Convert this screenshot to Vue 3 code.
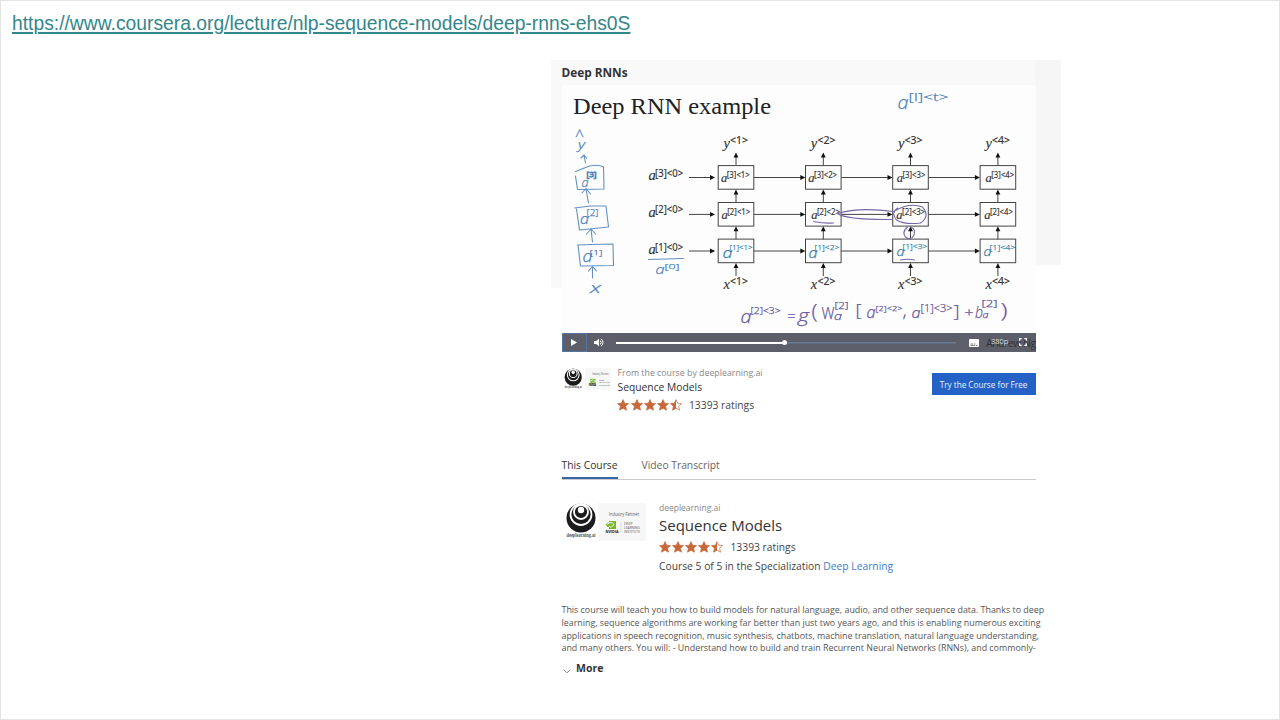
<script setup>
const url = 'https://www.coursera.org/lecture/nlp-sequence-models/deep-rnns-ehs0S'
const columns = [735.5, 822.8, 910, 997.4]
const rows = [177.5, 214.4, 251]

// Printed formulas: letter plus superscript, each fitted to its drawn width
const printed = []
const formula = (base, sup, x, y, w, small) => printed.push({ base, sup, x, y, w, small })
columns.forEach((c, i) => {
  formula('y', `<${i + 1}>`, c - 12.5, 148, 18)
  formula('x', `<${i + 1}>`, c - 12.5, 288.5, 18)
  const shift = [0, 0, 1.2, 2.6][i]
  formula('a', `[3]<${i + 1}>`, c - 15 + shift, 181.5, 23, true)
  formula('a', `[2]<${i + 1}>`, c - 14.5 + [0, 2.4, 0.3, 0.8][i], 218.6, 23, true)
})
;[3, 2, 1].forEach((n, i) => formula('a', `[${n}]<0>`, 648, [180.3, 217.2, 254.3][i], 28))

// Handwritten notes: text, x, baseline, width, size, tilt, colour
const notes = [
  ['a', 897, 109, 11, 19, 0, 'blue', true],
  ['[l]<t>', 908, 100.5, 40, 11, 0, 'blue'],
  ['^', 574.5, 142, 9, 16, 0, 'blue'],
  ['y', 577.5, 149, 7, 12, 0, 'blue', true],
  ['a', 581, 187, 7, 13, 0, 'blue', true],
  ['[3]', 586, 176.5, 10, 8, 0, 'blue heavy'],
  ['a', 579.5, 223.5, 9, 14, 0, 'blue', true],
  ['[2]', 586, 216, 12, 9, 0, 'blue'],
  ['a', 582, 261.5, 10, 17, 0, 'blue', true],
  ['[1]', 589, 254.5, 13, 8, 0, 'blue'],
  ['x', 589.5, 293, 11, 15, 0, 'blue', true],
  ['a', 655, 273.5, 9, 13, 0, 'blue', true],
  ['[0]', 664, 268.5, 15, 8, 0, 'blue'],
  ['a', 722, 257.5, 10, 15, 0, 'teal', true],
  ['[1]<1>', 729, 249.5, 23, 8, 0, 'teal'],
  ['a', 808, 257.5, 9, 14, 0, 'teal', true],
  ['[1]<2>', 814, 249.5, 25, 8, 0, 'teal'],
  ['a', 896, 255.5, 8, 12, 0, 'teal', true],
  ['[1]<3>', 902, 248.5, 25, 8, 0, 'teal'],
  ['a', 983, 255.5, 8, 12, 0, 'teal', true],
  ['[1]<4>', 989, 250, 26, 8, 0, 'teal'],
  ['a', 740, 323, 11, 18, 0, 'purple', true],
  ['[2]<3>', 750, 313.5, 30, 9, 0, 'purple'],
  ['=', 787, 321, 8, 13, 0, 'purple'],
  ['g', 797.5, 322, 11, 18, 0, 'purple', true],
  ['(', 811, 319, 6, 20, 0, 'purple'],
  ['W', 821, 318.5, 13, 16, 0, 'purple'],
  ['a', 833.5, 320, 8, 11, 0, 'purple', true],
  ['[2]', 834, 308.5, 14, 9, 0, 'purple'],
  ['[', 855, 316, 6, 16, 0, 'purple'],
  ['a', 866, 317.5, 9, 16, 0, 'purple', true],
  ['[2]<2>', 875, 311, 27, 8, 0, 'purple'],
  [',', 902, 317, 4, 18, 0, 'purple'],
  ['a', 911, 317.5, 9, 15, 0, 'purple', true],
  ['[1]<3>', 920, 312, 32, 10, 0, 'purple'],
  [']', 953, 317, 6, 17, 0, 'purple'],
  ['+', 964, 316.5, 9, 12, 0, 'purple'],
  ['b', 974.5, 318, 8, 17, 0, 'purple', true],
  ['a', 982, 318, 6, 9, 0, 'purple', true],
  ['[2]', 981, 306.5, 16, 9, 0, 'purple'],
  [')', 1000, 317.5, 7, 20, 0, 'purple'],
].map(([t, x, y, w, s, , c, it]) => ({ t, x, y, w, s, c, it }))

const star = 'M6 .6 7.6 4.2 11.5 4.6 8.6 7.2 9.5 11.2 6 9.2 2.5 11.2 3.4 7.2 .5 4.6 4.4 4.2Z'
const starHalf = 'M6 .6V9.2L2.5 11.2 3.4 7.2 .5 4.6 4.4 4.2Z'
const description = [
  'This course will teach you how to build models for natural language, audio, and other sequence data. Thanks to deep',
  'learning, sequence algorithms are working far better than just two years ago, and this is enabling numerous exciting',
  'applications in speech recognition, music synthesis, chatbots, machine translation, natural language understanding,',
  'and many others. You will: - Understand how to build and train Recurrent Neural Networks (RNNs), and commonly-',
]
</script>

<template>
  <div class="page">
    <header><a class="url">{{ url }}</a></header>
    <main>
      <section class="hero">
        <h1>Deep RNNs</h1>
        <svg class="slide" viewBox="561.5 85 474 248" width="474" height="248">
          <text class="slide-title" x="572.5" y="113.5" textLength="198" lengthAdjust="spacingAndGlyphs">Deep RNN example</text>
          <g class="wires">
            <template v-for="(c, i) in columns" :key="c">
              <rect v-for="r in rows" :key="r" :x="c - 17.8" :y="r - 11.9" width="35.6" height="23.6" />
              <template v-for="y in [165.5, 202.4, 239.3, 276]" :key="y">
                <path :d="`M${c} ${y}V${y - 9}`" />
                <path class="head" :d="`M${c} ${y - 13}l2.4 5h-4.8z`" />
              </template>
              <template v-for="r in rows" :key="'h' + r">
                <path :d="`M${i ? columns[i - 1] + 18 : 688.5} ${r}H${c - 22}`" />
                <path class="head" :d="`M${i ? c - 18 : 714.5} ${r}l-5 -2.4v4.8z`" />
              </template>
            </template>
          </g>
          <g v-for="(f, i) in printed" :key="i" class="printed" :class="{ small: f.small }">
            <text class="base" :x="f.x" :y="f.y">{{ f.base }}</text>
            <text class="sup" :x="f.x + (f.small ? 5.8 : 6.6)" :y="f.y - 3.8" :textLength="f.w" lengthAdjust="spacingAndGlyphs">{{ f.sup }}</text>
          </g>
          <g class="ink">
            <path class="blue" d="M575 171.5 589 166Q598 164 603 167L603.5 189 577 189.500 575 176M574 208 590 206 605.500 206 608 227 579 230 576 209M577 245 590 244.500 612.500 244 613 265.500 580 266 577.500 245" />
            <path class="blue" d="M585 163 583.500 155M580.500 158 583.500 155 586 158M588 203 585.500 189M581.500 193 585.500 188.500 590 194M592 242 590.500 229M586 234 590.500 229 595 234M592 278 592 267M588 271 592 266.500 596 271" />
            <path class="blue" d="M648 259.500 683 258.500" />
            <path class="purple" d="M813 221.500Q823 223.500 833 223M837 213.500Q858 207 893 211.500M837 213.500Q846 220 892 219.500M894 211Q909 202 922 207Q930 216 920 223Q904 225 896 220Q890 213 897 208M900 260Q907 258.500 914 260M907 227Q901 232 905 237Q910 241 913 236Q916 229 910 227" />
            <text v-for="(n, i) in notes" :key="i" :class="[n.c, { slant: n.it }]" :x="n.x" :y="n.y" :font-size="n.s" :textLength="n.w" lengthAdjust="spacingAndGlyphs">{{ n.t }}</text>
          </g>
        </svg>
      </section>

      <div class="controls">
        <span class="play"><svg width="8" height="9" viewBox="0 0 8 9"><path d="M1 1 7 4.500 1 8Z" /></svg></span>
        <svg class="volume" width="10" height="9" viewBox="0 0 10 9"><path d="M0 3H2.200L5 .7V8.300L2.200 6H0Z" /><path class="line" d="M6.300 2.500Q8 4.500 6.300 6.500M7.200 .8Q10.800 4.500 7.200 8.200" /></svg>
        <span class="track"><i></i><b></b></span>
        <svg class="cc" width="10" height="8" viewBox="0 0 10 8"><rect width="10" height="8" rx="1" /><path d="M1.500 5H4M5 5H6.500M1.500 6.500H6M7 6.500H8.500" /></svg>
        <span class="author">Andrew Ng<em>380p</em></span>
        <svg class="full" width="8" height="8" viewBox="0 0 8 8"><path d="M.7 2.700V.7H2.700M5.300 .7H7.300V2.700M7.300 5.300V7.300H5.300M2.700 7.300H.7V5.300" /></svg>
      </div>

      <section class="summary">
        <svg class="logo" viewBox="0 0 82 42" width="47" height="24">
          <circle cx="16" cy="16" r="15" /><circle class="ring" cx="16" cy="12" r="10.300" /><circle class="ring" cx="16" cy="10" r="6.800" /><circle class="dot" cx="16" cy="7.500" r="3" />
          <text x="1" y="35" font-size="6" textLength="30" lengthAdjust="spacingAndGlyphs" class="serif">deeplearning.ai</text>
          <rect class="card" x="37" y="0" width="45" height="38" />
          <text x="49" y="13" font-size="5" textLength="29" lengthAdjust="spacingAndGlyphs">Industry Partner</text>
          <rect class="green" x="46" y="19" width="9" height="8" /><path class="white" d="M46 23Q51 18 55 23Q50 28 48 23" />
          <text class="nv" x="43" y="31" font-size="4.500" textLength="13">NVIDIA</text>
          <text x="61" y="22" font-size="4">DEEP</text><text x="61" y="26.500" font-size="4">LEARNING</text><text x="61" y="31" font-size="4">INSTITUTE</text>
        </svg>
        <div class="summary-text">
          <span class="from">From the course by deeplearning.ai</span>
          <span class="name">Sequence Models</span>
          <span class="rating">
            <svg v-for="n in 5" :key="n" width="12" height="12" viewBox="0 0 12 12"><path :d="n < 5 ? star : starHalf" /><path class="outline" :d="star" /></svg>
            <span>13393 ratings</span>
          </span>
        </div>
        <button>Try the Course for Free</button>
      </section>

      <nav><span class="active">This Course</span><span class="second">Video Transcript</span></nav>

      <section class="course">
        <svg class="logo" viewBox="0 0 82 42" width="82" height="42">
          <circle cx="16" cy="16" r="14.500" /><circle class="ring" cx="16" cy="12.500" r="10.500" /><circle class="ring" cx="16" cy="10" r="7" /><circle class="dot" cx="16" cy="8" r="3.200" />
          <text x="1.500" y="34.500" font-size="5.200" textLength="29" lengthAdjust="spacingAndGlyphs" class="serif">deeplearning.ai</text>
          <rect class="card" x="33" y="1" width="48" height="38" />
          <text x="44" y="14" font-size="4.800" textLength="30" lengthAdjust="spacingAndGlyphs">Industry Partner</text>
          <path class="green" d="M44 19H51V27H44V25H42.500L40.500 22.500 44 20.500Z" /><path class="white" d="M42.500 22.500Q46 18.500 49 22.500Q46 26.500 44 24" />
          <text class="nv" x="40.500" y="30.500" font-size="4" textLength="13" lengthAdjust="spacingAndGlyphs">NVIDIA</text>
          <path class="divider" d="M56 20V30.500" />
          <text x="59" y="22.500" font-size="3.600">DEEP</text><text x="59" y="26.500" font-size="3.600" textLength="16" lengthAdjust="spacingAndGlyphs">LEARNING</text><text x="59" y="30.500" font-size="3.600" textLength="16" lengthAdjust="spacingAndGlyphs">INSTITUTE</text>
        </svg>
        <div class="course-text">
          <span class="org">deeplearning.ai</span>
          <h2>Sequence Models</h2>
          <span class="rating">
            <svg v-for="n in 5" :key="n" width="12" height="12" viewBox="0 0 12 12"><path :d="n < 5 ? star : starHalf" /><path class="outline" :d="star" /></svg>
            <span>13393 ratings</span>
          </span>
          <span class="spec">Course 5 of 5 in the Specialization <a>Deep Learning</a></span>
        </div>
      </section>

      <p><span v-for="(line, i) in description" :key="i" :class="'line' + i">{{ line }}</span></p>
      <div class="more"><svg width="8" height="5" viewBox="0 0 8 5"><path d="M.8 .8 4 3.800 7.200 .8" /></svg><strong>More</strong></div>
    </main>
  </div>
</template>

<style>
body { margin: 0; background: #fff; }
</style>
<style scoped>
* { box-sizing: border-box; }
.page { width: 1280px; height: 720px; background: #fff; border: 1px solid #e4e4e4; font-family: "Open Sans", "Noto Sans", sans-serif; color: #444; overflow: hidden; white-space: nowrap; }
header { height: 59px; padding: 10px 0 0 11px; }
.url { font: 19.300px/26px "Liberation Sans", sans-serif; color: #33878b; text-decoration: underline; text-decoration-thickness: 1.500px; text-underline-offset: 2px; }
main { margin-left: 550px; width: 510px; }
.hero { height: 273px; padding-left: 10.500px; background: linear-gradient(#f6f6f6, #f6f6f6) 484px 0 / 26px 205px no-repeat, linear-gradient(#f9f9f9, #f9f9f9) 0 0 / 484px 228px no-repeat; }
h1 { margin: 0; height: 25px; font-size: 11.800px; line-height: 24px; font-weight: 700; color: #333; }
.slide { display: block; background: #fdfdfe; }
.slide-title { font: 24px "Liberation Serif", serif; fill: #222; }
.wires { fill: none; stroke: #444; stroke-width: 1; }
.wires .head { fill: #111; stroke: none; }
.printed { fill: #333; stroke: #333; stroke-width: .15px; font-family: "Liberation Serif", serif; }
.printed .base { font-size: 14.500px; font-style: italic; }
.printed .sup { font-size: 10px; font-family: "Noto Sans", sans-serif; }
.printed.small .base { font-size: 12.500px; }
.printed.small .sup { font-size: 8px; }
.ink { font-family: "Open Sans", sans-serif; font-weight: 300; }
.ink path { fill: none; stroke-width: 1.100; stroke-linecap: round; stroke-linejoin: round; }
.ink path.blue { stroke: #6290c4; }
.ink path.purple { stroke: #7865a8; }
.ink text { stroke-width: .25px; }
.ink text.blue { fill: #4d80b8; stroke: #4d80b8; }
.ink text.teal { fill: #397fa8; stroke: #397fa8; }
.ink text.purple { fill: #67549a; stroke: #67549a; }
.ink text.heavy { stroke-width: 1px; }
.slant { font-style: italic; }
.controls { margin-left: 10.500px; width: 474px; height: 19px; background: #5c5f6a; display: flex; align-items: center; }
.controls svg { fill: #fff; flex: none; }
.play { width: 25px; height: 19px; border: 1px solid #53759f; display: flex; align-items: center; justify-content: center; }
.volume { margin-left: 7.500px; }
.volume .line { fill: none; stroke: #fff; }
.track { margin-left: 12px; width: 340px; height: 5px; display: flex; align-items: center; background: linear-gradient(#687b96, #687b96) 0 50% / 100% 1.500px no-repeat; }
.track i { width: 166px; height: 2px; background: #fff; }
.track b { width: 5px; height: 5px; border-radius: 50%; background: #fff; }
.cc { margin-left: 13px; }
.cc path { stroke: #5c5f6a; stroke-width: .8; }
.author { position: relative; margin-left: 7px; width: 44px; font: 10.500px/19px "Open Sans", sans-serif; letter-spacing: -.5px; color: #30313a; padding-top: 2px; }
.author em { position: absolute; left: 5px; top: 0; font: 7.500px/18px "Open Sans", sans-serif; letter-spacing: 0; color: #ddd; }
.controls .full { margin-left: -11.500px; margin-top: -1px; fill: none; stroke: #fff; stroke-width: 1.300; position: relative; }
.summary { display: flex; margin-left: 10.500px; width: 474px; height: 106px; padding-top: 14px; }
.logo { flex: none; fill: #1c1c1c; }
.logo .ring { fill: none; stroke: #fff; stroke-width: 1.800; }
.logo .dot { fill: #fff; }
.logo .card { fill: #f7f7f7; }
.logo text { fill: #555; font-family: "Open Sans", sans-serif; }
.logo .serif { font-family: "Liberation Serif", serif; font-weight: 700; }
.logo .nv { font-weight: 700; fill: #111; }
.logo .green { fill: #76b82a; }
.logo .white { fill: none; stroke: #fff; }
.logo .divider { stroke: #bbb; stroke-width: .5; }
.summary .logo { margin: 2px 0 0 2px; }
.summary-text { display: flex; flex-direction: column; margin-left: 7px; width: 314px; }
.from { font-size: 8.800px; line-height: 14px; color: #888; }
.name { font-size: 10.300px; line-height: 15px; color: #333; }
.rating { display: flex; align-items: center; gap: 1.200px; height: 19px; font-size: 10.300px; color: #444; }
.rating svg { fill: #c8683a; margin-left: -.1px; }
.rating .outline { fill: none; stroke: #c8683a; stroke-width: .7; }
.rating span { margin-left: 6px; }
button { width: 104px; height: 22px; margin: 7px 0 0 auto; flex: none; padding: 0; border: 0; background: #2463c5; color: #e9f0fb; font: 8.200px "Open Sans", sans-serif; }
nav { margin-left: 10.500px; width: 474px; height: 22px; display: flex; border-bottom: 1px solid #ccc; font-size: 10.300px; line-height: 15px; color: #666; }
.active { height: 21px; border-bottom: 2.500px solid #3665a9; color: #333; }
.second { margin-left: 24px; }
.course { display: flex; margin-left: 14px; padding-top: 22px; height: 124px; }
.course-text { display: flex; flex-direction: column; margin-left: 12px; }
.org { font-size: 8.500px; line-height: 12px; color: #888; }
h2 { margin: 0; font-weight: 400; font-size: 15px; line-height: 23px; color: #333; }
.course .rating { height: 20px; }
.spec { font-size: 10.300px; line-height: 18px; }
.spec a { color: #3d7cc9; }
p { margin: 0 0 0 10.500px; font-size: 8.900px; line-height: 12.800px; color: #555; }
p span { display: block; }
.more { margin-left: 12px; display: flex; align-items: center; margin-top: 3px; height: 20px; font-size: 10.500px; color: #333; }
.more svg { fill: none; stroke: #888; margin: 7px 5px 0 0; }
</style>
